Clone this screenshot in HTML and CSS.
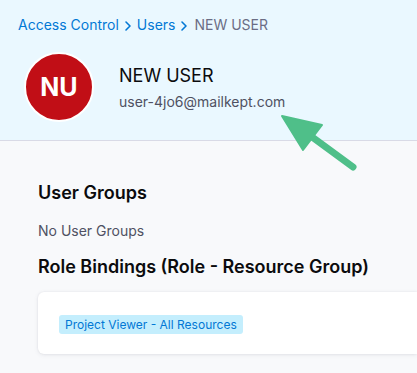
FILE: index.html
```html
<!DOCTYPE html>
<html lang="en">
<head>
  <meta charset="UTF-8" />
  <title>NEW USER</title>
  <link rel="stylesheet" href="styles.css">
</head>
<body>
  <!-- header -->
  <div class="page-header">
    <div class="breadcrumb">
      <a href="#">Access Control</a>
      <svg class="chevron" width="8" height="12" viewBox="0 0 8 12"><path d="M2 2 L6 6 L2 10" fill="none" stroke="#0278d5" stroke-width="1.6" stroke-linecap="round" stroke-linejoin="round" /></svg>
      <a href="#">Users</a>
      <svg class="chevron" width="8" height="12" viewBox="0 0 8 12"><path d="M2 2 L6 6 L2 10" fill="none" stroke="#0278d5" stroke-width="1.6" stroke-linecap="round" stroke-linejoin="round" /></svg>
      <span class="current">NEW USER</span>
    </div>
    <div class="user-info">
      <div class="avatar">NU</div>
      <div class="user-text">
        <div class="user-name">NEW USER</div>
        <div class="user-email">user-4jo6@mailkept.com</div>
      </div>
    </div>
  </div>

  <!-- body -->
  <div class="page-body">
    <h2>User Groups</h2>
    <p class="empty">No User Groups</p>
    <h2>Role Bindings (Role - Resource Group)</h2>
    <div class="card">
      <span class="tag">Project Viewer - All Resources</span>
    </div>
  </div>

  <!-- annotation arrow -->
  <svg class="arrow" width="95" height="75" viewBox="0 0 95 75">
    <line x1="38" y1="29" x2="83" y2="62" stroke="#4fbf89" stroke-width="7" stroke-linecap="round" />
    <polygon points="12,11 52,20 33,45" fill="#4fbf89" stroke="#4fbf89" stroke-width="2" stroke-linejoin="round" />
  </svg>
</body>
</html>
```

FILE: styles.css
```css
body {
  margin: 0;
  font-family: 'Inter', 'Noto Sans', sans-serif;
  background-color: #f8f9fb;
  color: #0b0b0d;
  position: relative;
  height: 373px;
  overflow: hidden;
}

/* header */
.page-header {
  background-color: #eaf8ff;
  border-bottom: 1px solid #d9dae6;
  padding: 15px 18px 0;
  height: 125px;
}

.breadcrumb {
  font-size: 14px;
  line-height: 20px;
  display: flex;
  align-items: center;
  gap: 5px;
}

.breadcrumb a {
  color: #0278d5;
  text-decoration: none;
}

.chevron {
  margin-top: 1px;
}

.current {
  color: #6b6d85;
  margin-left: 1px;
}

.user-info {
  display: flex;
  align-items: center;
  gap: 25px;
  margin-top: 17px;
  padding-left: 6px;
}

.avatar {
  width: 66px;
  height: 66px;
  border-radius: 50%;
  border: 2px solid #ffffff;
  background-color: #c10e16;
  color: #ffffff;
  font-weight: 700;
  font-size: 25px;
  display: flex;
  align-items: center;
  justify-content: center;
}

.user-name {
  font-size: 18px;
  line-height: 24px;
  margin-top: 1px;
  color: #0b0b0d;
}

.user-email {
  font-size: 14px;
  line-height: 20px;
  margin-top: 4px;
  color: #4f5162;
}

/* body */
.page-body {
  padding: 40px 0 0 38px;
}

h2 {
  font-size: 18px;
  font-weight: 600;
  line-height: 24px;
  margin: 0;
}

.empty {
  font-size: 14px;
  line-height: 20px;
  color: #4f5162;
  margin: 16px 0 14px;
}

.card {
  margin-top: 13px;
  background-color: #ffffff;
  border-radius: 6px 0 0 6px;
  box-shadow: 0 0 2px rgba(40, 41, 61, 0.08), 0 1px 4px rgba(96, 97, 112, 0.12);
  padding: 21px 0 21px 21px;
  height: 20px;
}

.tag {
  display: inline-block;
  background-color: #c4eefd;
  color: #0278d5;
  font-size: 12px;
  line-height: 19px;
  padding: 0 6px;
  border-radius: 3px;
}

.arrow {
  position: absolute;
  left: 270px;
  top: 105px;
}
```
